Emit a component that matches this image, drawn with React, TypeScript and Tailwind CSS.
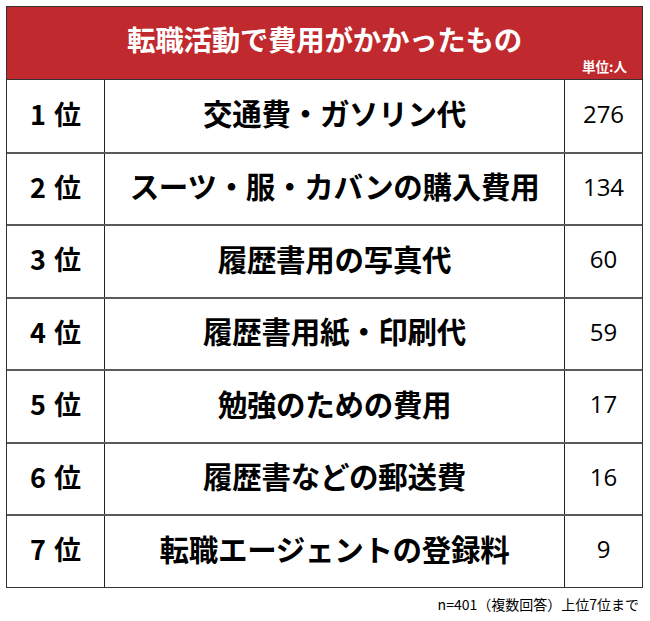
const rows = [
  { rank: '1', label: '交通費・ガソリン代', count: '276' },
  { rank: '2', label: 'スーツ・服・カバンの購入費用', count: '134' },
  { rank: '3', label: '履歴書用の写真代', count: '60' },
  { rank: '4', label: '履歴書用紙・印刷代', count: '59' },
  { rank: '5', label: '勉強のための費用', count: '17' },
  { rank: '6', label: '履歴書などの郵送費', count: '16' },
  { rank: '7', label: '転職エージェントの登録料', count: '9' },
];

const jp = "font-['Noto_Sans_CJK_JP',sans-serif]";

export default function App() {
  return (
    <div className={`w-[650px] h-[621px] bg-white pt-[6px] pl-[6px] ${jp}`}>
      <div className="w-[637px] border border-[#333]">
        {/* Header */}
        <div className="relative h-[72px] bg-[#c0292d] flex items-center justify-center">
          <h1 className="text-white text-[28.5px] font-bold leading-none tracking-[-0.3px] -mt-[7px]">
            転職活動で費用がかかったもの
          </h1>
          <span className="absolute right-[15px] bottom-[6px] text-white text-[13.5px] font-bold leading-none">
            単位:人
          </span>
        </div>

        {/* Rows */}
        {rows.map((row, i) => (
          <div
            key={row.rank}
            className={`grid grid-cols-[98px_1fr_77px] h-[72.5px] ${
              i === 0 ? 'border-t border-[#333]' : 'border-t-2 border-[#5a5a5a]'
            }`}
          >
            <div className="flex items-center justify-center pb-[4px] border-r border-[#222] text-[27px] font-bold text-black">
              <span>{row.rank}</span>
              <span className="ml-[8px]">位</span>
            </div>
            <div className="flex items-center justify-center pb-[6px] border-r border-[#222] text-[29.5px] font-bold text-black leading-none tracking-[-0.3px]">
              {row.label}
            </div>
            <div className="flex items-center justify-center pb-[4px] text-[24px] text-black font-['Open_Sans',sans-serif]">
              {row.count}
            </div>
          </div>
        ))}
      </div>

      <p className="mt-[6px] pr-[11px] text-right text-[14px] leading-[20px] text-black">
        n=401（複数回答）上位7位まで
      </p>
    </div>
  );
}
